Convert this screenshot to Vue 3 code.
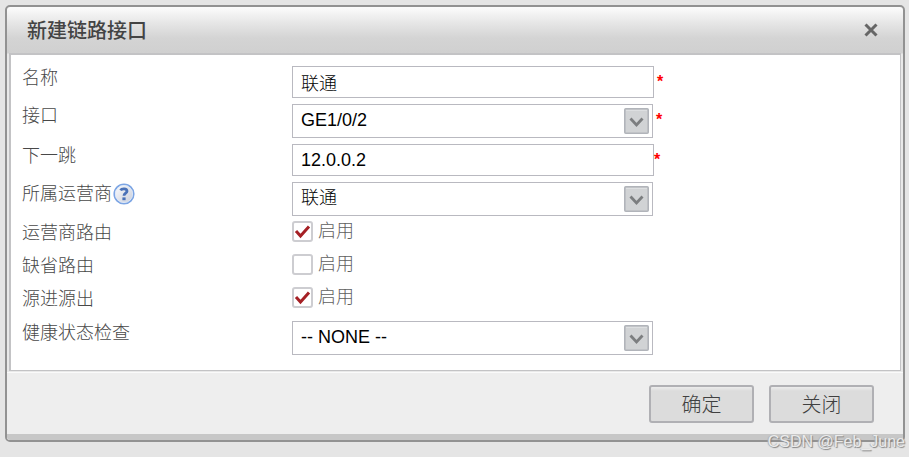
<script setup>
import { ref } from 'vue'

const rows = ref([
  { id: 'name', label: '名称', type: 'text', value: '联通', required: true },
  { id: 'port', label: '接口', type: 'select', value: 'GE1/0/2', required: true },
  { id: 'hop', label: '下一跳', type: 'text', value: '12.0.0.2', required: true, tight: true },
  { id: 'isp', label: '所属运营商', type: 'select', value: '联通', help: true },
  { id: 'isproute', label: '运营商路由', type: 'check', value: true },
  { id: 'default', label: '缺省路由', type: 'check', value: false },
  { id: 'source', label: '源进源出', type: 'check', value: true },
  { id: 'health', label: '健康状态检查', type: 'select', value: '-- NONE --' },
])
const options = Object.fromEntries(rows.value.map((r) => [r.id, [r.value]]))
</script>

<template>
  <div class="page">
    <form class="dialog" @submit.prevent>
      <header class="head">
        <h1>新建链路接口</h1>
        <button class="close" type="button" aria-label="关闭">
          <svg viewBox="0 0 14 14" width="14" height="14"><path d="M1.500 1.500L12.500 12.500M12.500 1.500L1.500 12.500" /></svg>
        </button>
      </header>

      <main class="body">
        <div v-for="r in rows" :key="r.id" class="row" :class="{ checks: r.type === 'check' }">
          <div class="caption">
            <label :for="r.id">{{ r.label }}</label>
            <svg v-if="r.help" class="help" viewBox="0 0 22 22" width="22" height="22">
              <defs>
                <linearGradient id="helpFill" x1="0" y1="0" x2="1" y2="1">
                  <stop offset="0" stop-color="#ffffff" />
                  <stop offset="0.5" stop-color="#e2e5ec" />
                  <stop offset="1" stop-color="#c6cbd8" />
                </linearGradient>
              </defs>
              <circle cx="11" cy="11" r="9.8" fill="url(#helpFill)" stroke="#7ca5e4" stroke-width="1.6" />
              <circle cx="11" cy="11" r="8.6" fill="none" stroke="#dce8fa" stroke-width="0.8" />
              <path d="M7.600 7.400C8.400 5.600 14 5 14 8.300C14 10.200 11 10.300 11 12.800" fill="none" stroke="#4a72b8" stroke-width="2.800" />
              <rect x="9.400" y="14.400" width="3.200" height="2.800" fill="#4a72b8" />
            </svg>
          </div>

          <div class="control" :class="{ tight: r.tight }">
            <input v-if="r.type === 'text'" :id="r.id" v-model="r.value" class="field" type="text" />
            <div v-else-if="r.type === 'select'" class="pick">
              <select :id="r.id" v-model="r.value" class="field">
                <option v-for="o in options[r.id]" :key="o">{{ o }}</option>
              </select>
              <svg class="arrow" viewBox="0 0 25 26" width="25" height="26">
                <rect x="0.800" y="0.800" width="23.400" height="24.400" rx="1" fill="#d1d3d5" stroke="#b1b4ba" stroke-width="1.600" />
                <path d="M2 2.500H23" stroke="#dddfe1" />
                <path d="M6.500 10.500L12.500 17L18.500 10.500" fill="none" stroke="#7c7e80" stroke-width="2.800" />
              </svg>
            </div>
            <label v-else class="toggle">
              <span class="box">
                <input :id="r.id" v-model="r.value" type="checkbox" />
                <svg v-if="r.value" class="tick" viewBox="0 0 21 21" width="21" height="21">
                  <path d="M4 10L8.500 15L17 5.500" />
                </svg>
              </span>
              启用
            </label>
            <span v-if="r.required" class="star">*</span>
          </div>
        </div>
      </main>

      <footer class="foot">
        <button class="action" type="submit">确定</button>
        <button class="action" type="button">关闭</button>
      </footer>
    </form>
    <span class="mark">CSDN @Feb_June</span>
  </div>
</template>

<style>
body {
  background: #e5e5e5;
}
</style>

<style scoped>
* {
  box-sizing: border-box;
}
.page {
  position: relative;
  min-height: 100vh;
  padding: 5px 4px 15px 5px;
  font-family: "Liberation Sans", "Noto Sans CJK SC", sans-serif;
  font-size: 18px;
  font-weight: 300;
  color: #484848;
}
.dialog {
  border: 2px solid #929292;
  border-radius: 5px;
  background: linear-gradient(#fcfcfc 0, #e6e6e6 16px, #d4d4d4 31px, #d0d0d0 46px, #e9e9e9 47px);
  overflow: hidden;
}
.head {
  display: flex;
  align-items: center;
  justify-content: space-between;
  height: 46px;
  padding: 0 25px 0 20px;
}
h1 {
  margin: 0;
  font-size: 20px;
  line-height: 24px;
  font-weight: 500;
  font-family: "Noto Sans CJK SC", sans-serif;
  color: #444;
}
.close {
  display: flex;
  padding: 0;
  border: 0;
  background: none;
}
.close path {
  stroke: #666;
  stroke-width: 3;
}
.body {
  margin: 0 2px;
  padding: 8px 11px 12px;
  border: 2px solid #c3c3c5;
  border-right-width: 1px;
  border-bottom-width: 1px;
  background: #fff;
}
.row {
  display: grid;
  grid-template-columns: 270px minmax(0, 1fr);
  align-items: start;
  padding: 3px 0;
}
.checks {
  height: 33px;
  padding: 2px 0 0;
}
.caption {
  display: flex;
  align-items: center;
  height: 24px;
  line-height: 24px;
}
.help {
  margin-left: 1px;
}
.control {
  display: flex;
  gap: 3px;
}
.tight {
  gap: 0;
}
.field {
  display: block;
  width: 362px;
  height: 32px;
  padding: 0 8px;
  border: 1px solid #b9b9c0;
  border-radius: 0;
  background: #fff;
  color: #000;
  font: inherit;
  outline: none;
}
.pick {
  position: relative;
}
select.field {
  width: 361px;
  height: 34px;
  padding: 0 32px 2px 8px;
  appearance: none;
}
.arrow {
  position: absolute;
  top: 4px;
  right: 4px;
  pointer-events: none;
}
.toggle {
  display: flex;
  align-items: center;
  gap: 5px;
  height: 21px;
  line-height: 21px;
  color: #606060;
}
.box {
  position: relative;
  width: 21px;
  height: 21px;
}
.box input {
  display: block;
  width: 21px;
  height: 21px;
  margin: 0;
  border: 2px solid #cdcdd1;
  border-radius: 3px;
  background: #fff;
  appearance: none;
}
.tick {
  position: absolute;
  top: 0;
  left: 0;
  pointer-events: none;
}
.tick path {
  fill: none;
  stroke: #a52025;
  stroke-width: 3;
}
.star {
  padding-top: 6px;
  font-size: 16px;
  line-height: 20px;
  font-weight: 700;
  color: #f00;
}
.foot {
  display: flex;
  justify-content: flex-end;
  gap: 15px;
  margin-top: 1px;
  padding: 12px 29px 11px;
  border-top: 1px solid #fafafa;
  border-bottom: 6px solid #c7c7c7;
  background: #eee;
}
.action {
  width: 105px;
  height: 38px;
  padding: 0 0 2px;
  border: 2px solid #b0b0b4;
  border-radius: 3px;
  background: linear-gradient(#ececec 0, #dcdcdc 4px);
  color: #404040;
  font: inherit;
  font-size: 20px;
}
.mark {
  position: absolute;
  right: 4px;
  bottom: 5px;
  font-size: 16px;
  line-height: 20px;
  font-weight: 400;
  color: #eaeaea;
  text-shadow: 1px 1px 1px #858585, -1px 0 1px #b0b0b0;
}
</style>
